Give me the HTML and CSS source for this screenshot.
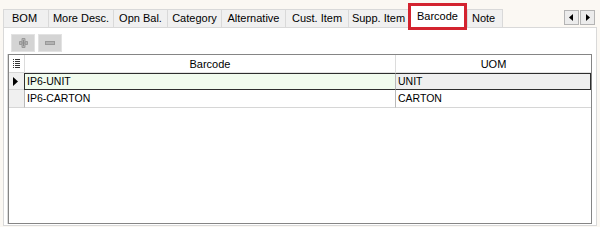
FILE: index.html
```html
<!DOCTYPE html>
<html>
<head>
<meta charset="utf-8">
<link rel="stylesheet" href="styles.css">
</head>
<body>
<div class="window">
  <div class="tabs">
    <div class="tab w-bom">BOM</div>
    <div class="tab w-desc">More Desc.</div>
    <div class="tab w-opn">Opn Bal.</div>
    <div class="tab w-cat">Category</div>
    <div class="tab w-alt">Alternative</div>
    <div class="tab w-cust">Cust. Item</div>
    <div class="tab w-supp">Supp. Item</div>
    <div class="tab active w-bar">Barcode</div>
    <div class="tab w-note">Note</div>
    <div class="scroller">
      <div class="sbtn"><svg width="5" height="7" viewBox="0 0 5 7"><path d="M4 0 L0 3.5 L4 7 Z" fill="#000"/></svg></div>
      <div class="sbtn"><svg width="5" height="7" viewBox="0 0 5 7"><path d="M1 0 L5 3.5 L1 7 Z" fill="#000"/></svg></div>
    </div>
  </div>
  <div class="panel">
    <div class="toolbar">
      <div class="tbtn">
        <svg width="9" height="10" viewBox="0 0 9 10">
          <path d="M3 0.5 H6 V3.5 H8.5 V6.5 H6 V9.5 H3 V6.5 H0.5 V3.5 H3 Z" fill="#b2b2b2" stroke="#999" stroke-width="1"/>
          <path d="M4.5 2 V8 M2 5 H7" stroke="#8c8c8c" stroke-width="1"/>
        </svg>
      </div>
      <div class="tbtn">
        <svg width="10" height="4" viewBox="0 0 10 4">
          <rect x="0.5" y="0.5" width="9" height="3" fill="#b2b2b2" stroke="#999" stroke-width="1"/>
        </svg>
      </div>
    </div>
    <div class="grid">
      <div class="hdr ind">
        <svg width="7" height="9" viewBox="0 0 7 9">
          <rect x="0" y="0" width="1" height="1" fill="#333"/>
          <rect x="2" y="0" width="5" height="1" fill="#333"/>
          <rect x="0" y="2" width="1" height="1" fill="#333"/>
          <rect x="2" y="2" width="5" height="1" fill="#333"/>
          <rect x="0" y="4" width="1" height="1" fill="#333"/>
          <rect x="2" y="4" width="5" height="1" fill="#333"/>
          <rect x="0" y="6" width="1" height="1" fill="#333"/>
          <rect x="2" y="6" width="5" height="1" fill="#333"/>
          <rect x="0" y="8" width="1" height="1" fill="#333"/>
          <rect x="2" y="8" width="5" height="1" fill="#333"/>
        </svg>
      </div>
      <div class="hdr col">Barcode</div>
      <div class="hdr col last">UOM</div>

      <div class="ind cur">
        <svg width="5" height="9" viewBox="0 0 5 9"><path d="M0 0 L5 4.5 L0 9 Z" fill="#000"/></svg>
      </div>
      <div class="cell sel first focus">IP6-UNIT</div>
      <div class="cell sel last">UNIT</div>

      <div class="ind"></div>
      <div class="cell">IP6-CARTON</div>
      <div class="cell last">CARTON</div>

      <div class="filler"></div>
    </div>
  </div>
</div>
</body>
</html>
```
FILE: styles.css
```css
* { box-sizing: border-box; }
html, body { margin: 0; padding: 0; }
body {
  width: 600px;
  height: 227px;
  background: #fbf8f3;
  font-family: "Liberation Sans", Arial, sans-serif;
  font-size: 10.5px;
  color: #000;
  overflow: hidden;
}
.window {
  display: flex;
  flex-direction: column;
  height: 227px;
  padding: 6px 3px 1px 3px;
}
.tabs {
  display: flex;
  align-items: flex-end;
  height: 21px;
  flex: none;
}
.tab {
  height: 18px;
  line-height: 17px;
  text-align: center;
  background: #f0f0f0;
  border: 1px solid #d9d9d9;
  border-right: none;
  border-bottom: none;
  white-space: nowrap;
  font-size: 11px;
}
.w-bom { width: 45px; text-align: left; padding-left: 8px; }
.w-desc { width: 65px; }
.w-opn { width: 54px; }
.w-cat { width: 54px; }
.w-alt { width: 64px; }
.w-cust { width: 63px; }
.w-supp { width: 60px; }
.w-bar { width: 53px; }
.w-note { width: 36px; border-right: 1px solid #d9d9d9; text-align: left; padding-left: 4px; }
.tab.active {
  height: 21px;
  line-height: 20px;
  background: #fff;
  margin: 0 3px;
  border: none;
  outline: 3px solid #d3232f;
  position: relative;
  z-index: 2;
}
.scroller {
  margin-left: auto;
  margin-right: 2px;
  align-self: flex-start;
  margin-top: 4px;
  display: flex;
  gap: 1px;
}
.sbtn {
  width: 15px;
  height: 15px;
  background: #ececec;
  border: 1px solid #b4b4b4;
  display: flex;
  align-items: center;
  justify-content: center;
}
.panel {
  flex: 1;
  display: flex;
  flex-direction: column;
  background: #fff;
  border: 1px solid #d9d9d9;
  padding: 6px 4px 1px 4px;
}
.toolbar {
  display: flex;
  gap: 3px;
  padding-left: 3px;
  margin-bottom: 2px;
  flex: none;
}
.tbtn {
  width: 24px;
  height: 18px;
  background: #d4d4d4;
  border: 1px solid #e2e2e2;
  display: flex;
  align-items: center;
  justify-content: center;
}
.grid {
  flex: 1;
  display: grid;
  grid-template-columns: 15px 371px 1fr;
  grid-template-rows: 18px 17px 18px 1fr;
  border: 1px solid #858585;
  box-shadow: -1px 0 0 #dcdcdc;
  background: #fff;
}
.hdr {
  border-bottom: 1px solid #e3e3e3;
  display: flex;
  align-items: center;
  justify-content: center;
  font-size: 11px;
}
.hdr.col { border-left: 1px solid #dcdcdc; }
.ind {
  background: #f0f0f0;
  border-bottom: 1px solid #d6d6d6;
  display: flex;
  align-items: center;
  justify-content: center;
}
.hdr.ind { background: #fff; }
.ind.cur { justify-content: flex-start; padding-left: 4px; }
.cell {
  padding-left: 2px;
  line-height: 17px;
  border-left: 1px solid #b9b9b9;
  border-bottom: 1px solid #d6d6d6;
  white-space: nowrap;
  font-size: 10.5px;
}
.cell.sel {
  background: #efefef;
  border-top: 1px solid #2e2e2e;
  border-bottom: 1px solid #2e2e2e;
  line-height: 15px;
}
.cell.sel.first {
  background: #f1fbee;
  border-left: 1px solid #2e2e2e;
}
.cell.sel.last {
  border-right: 1px solid #2e2e2e;
}
.filler { grid-column: 1 / -1; }
```
